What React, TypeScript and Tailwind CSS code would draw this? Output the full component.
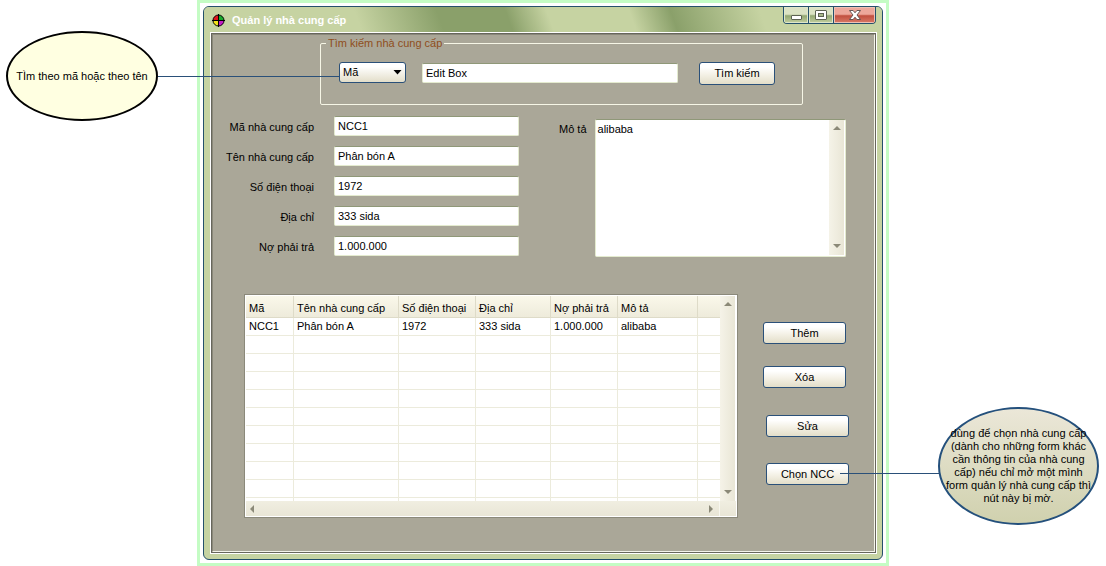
import React, { useState } from "react";

type Supplier = {
  code: string;
  name: string;
  phone: string;
  address: string;
  debt: string;
  note: string;
};

const suppliers: Supplier[] = [
  { code: "NCC1", name: "Phân bón A", phone: "1972", address: "333 sida", debt: "1.000.000", note: "alibaba" },
];

const columns = [
  { title: "Mã", width: "w-[48px]" },
  { title: "Tên nhà cung cấp", width: "w-[105px]" },
  { title: "Số điện thoại", width: "w-[77px]" },
  { title: "Địa chỉ", width: "w-[75px]" },
  { title: "Nợ phải trả", width: "w-[67px]" },
  { title: "Mô tả", width: "w-[80px]" },
  { title: "", width: "" },
];

const fields = [
  { id: "code", label: "Mã nhà cung cấp", value: "NCC1" },
  { id: "name", label: "Tên nhà cung cấp", value: "Phân bón A" },
  { id: "phone", label: "Số điện thoại", value: "1972" },
  { id: "address", label: "Địa chỉ", value: "333 sida" },
  { id: "debt", label: "Nợ phải trả", value: "1.000.000" },
];

const inputClass =
  "h-5 min-w-0 rounded-xs border border-[#e4ebcf] border-t-[#8f9878] bg-white px-[3px] text-[11px] text-black outline-none";

function PushButton({ className, children }: { className: string; children: React.ReactNode }) {
  return (
    <button
      type="button"
      className={`rounded-[3px] border border-[#2a5079] bg-linear-to-b from-white from-20% via-[#f4f1e6] via-55% to-[#e3dec9] text-center whitespace-nowrap ${className}`}
    >
      {children}
    </button>
  );
}

function Arrow({ direction }: { direction: "up" | "down" | "left" | "right" }) {
  const points = {
    up: "0,6 4,2 8,6",
    down: "0,2 8,2 4,6",
    left: "6,0 6,8 2,4",
    right: "2,0 6,4 2,8",
  }[direction];
  return (
    <svg width="8" height="8" viewBox="0 0 8 8" aria-hidden="true">
      <polygon points={points} fill="#8b8978" />
    </svg>
  );
}

function VerticalScroll() {
  return (
    <div className="flex w-[15px] shrink-0 flex-col justify-between bg-linear-to-r from-[#f5f3e8] to-[#e9e6d6]">
      <button type="button" aria-label="Cuộn lên" className="flex h-[15px] items-center justify-center">
        <Arrow direction="up" />
      </button>
      <button type="button" aria-label="Cuộn xuống" className="flex h-[18px] items-center justify-center">
        <Arrow direction="down" />
      </button>
    </div>
  );
}

function AppIcon() {
  return (
    <svg width="13" height="13" viewBox="0 0 13 13" aria-hidden="true">
      <path d="M6.5 6.5V1A5.5 5.5 0 0 0 1 6.5z" fill="#e0141c" />
      <path d="M6.5 6.5V1A5.5 5.5 0 0 1 12 6.5z" fill="#18a82c" />
      <path d="M6.5 6.5H1A5.5 5.5 0 0 0 6.5 12z" fill="#f2e21c" />
      <path d="M6.5 6.5H12A5.5 5.5 0 0 1 6.5 12z" fill="#c41cc4" />
      <circle cx="6.5" cy="6.5" r="5.5" fill="none" stroke="#000" />
      <path d="M6.5 0v13M0 6.5h13" stroke="#000" />
    </svg>
  );
}

function TitleBar() {
  const plain =
    "flex w-[25px] items-center justify-center border-r border-[#24506b] bg-linear-to-b from-[#dbe3c4] from-45% via-[#93a873] via-55% to-[#c3d09f] shadow-[inset_0_0_0_1px_#dfe7ca]";
  return (
    <header className="flex h-[25px] items-start rounded-t-[5px] bg-[linear-gradient(70deg,#c6d3a2_23%,#8aa06a_35%,#8aa06a_45%,#c6d3a2_51%,#c6d3a2_63%,#8aa06a_69%,#c6d3a2_82%)]">
      <div className="flex flex-1 items-center gap-[7px] pt-[6px] pl-2">
        <AppIcon />
        <h1 className="text-[11px] leading-[15px] font-bold text-white">Quản lý nhà cung cấp</h1>
      </div>
      <div className="mr-[6px] flex h-[17px] overflow-hidden rounded-b-[4px] border border-t-0 border-[#24506b]">
        <button type="button" aria-label="Thu nhỏ" className={plain}>
          <svg width="13" height="11" viewBox="0 0 13 11">
            <rect x="1.5" y="5.5" width="10" height="4" rx="0.5" fill="#fff" stroke="#5d6353" />
          </svg>
        </button>
        <button type="button" aria-label="Phóng to" className={plain}>
          <svg width="12" height="11" viewBox="0 0 12 11">
            <rect x="0.5" y="0.5" width="11" height="9" rx="0.5" fill="#fff" stroke="#5d6353" />
            <rect x="3.5" y="3.5" width="5" height="3" fill="#a9b98a" stroke="#5d6353" />
          </svg>
        </button>
        <button
          type="button"
          aria-label="Đóng"
          className="flex w-[41px] items-center justify-center bg-linear-to-b from-[#eda79b] from-45% via-[#c14f3f] via-55% to-[#d97a68] shadow-[inset_0_0_0_1px_#efc1b5]"
        >
          <svg width="12" height="10" viewBox="0 0 12 10">
            <path
              d="M0.5 0.5h3.6L6 2.8 7.9 0.5h3.6L8 5l3.5 4.5H7.9L6 7.2 4.1 9.5H0.5L4 5z"
              fill="#fff"
              stroke="#5a4a4a"
              strokeWidth="0.9"
            />
          </svg>
        </button>
      </div>
    </header>
  );
}

function SearchBox() {
  const [query, setQuery] = useState("Edit Box");
  return (
    <fieldset className="mr-[71px] ml-[107px] rounded-xs border border-[#f6f6e6] pr-[27px] pb-[19px] pl-[18px]">
      <legend className="-ml-[13px] px-[2px] leading-4 text-[#8f4e1c]">Tìm kiếm nhà cung cấp</legend>
      <div className="flex items-start pt-[11px]">
        <div className="relative mr-4 w-[67px] shrink-0">
          <select
            aria-label="Tìm theo"
            className="h-[21px] w-full appearance-none rounded-[3px] border border-[#2a5079] bg-linear-to-b from-white from-20% to-[#e3dec9] pl-[3px] text-[11px] text-black"
          >
            <option>Mã</option>
            <option>Tên</option>
          </select>
          <svg
            className="pointer-events-none absolute top-2 right-1"
            width="9"
            height="5"
            viewBox="0 0 9 5"
            aria-hidden="true"
          >
            <polygon points="0.5,0 8.5,0 4.5,4.5" fill="#000" />
          </svg>
          <span className="absolute top-[14px] right-full h-px w-[181px] bg-[#2a5079]" />
        </div>
        <input
          aria-label="Từ khóa"
          value={query}
          onChange={(e) => setQuery(e.target.value)}
          className={`mt-px mr-[21px] flex-1 ${inputClass}`}
        />
        <PushButton className="h-[23px] w-[76px]">Tìm kiếm</PushButton>
      </div>
    </fieldset>
  );
}

function DetailForm() {
  return (
    <div className="mt-[11px] flex items-start pr-7">
      <div className="grid grid-cols-[101px_185px] gap-x-5 gap-y-[10px]">
        {fields.map((field) => (
          <React.Fragment key={field.id}>
            <label htmlFor={field.id} className="h-5 text-right leading-[22px] whitespace-nowrap">
              {field.label}
            </label>
            <input id={field.id} defaultValue={field.value} className={inputClass} />
          </React.Fragment>
        ))}
      </div>
      <div className="mt-[3px] ml-10 flex flex-1 items-start gap-2">
        <label htmlFor="note" className="leading-5 whitespace-nowrap">
          Mô tả
        </label>
        <div className="flex h-[138px] min-w-0 flex-1 rounded-xs border border-[#e4ebcf] border-t-[#8f9878] bg-white pr-px pb-px">
          <textarea
            id="note"
            defaultValue="alibaba"
            className="min-w-0 flex-1 resize-none overflow-hidden px-[2px] py-[2px] text-[11px] leading-[14px] outline-none"
          />
          <VerticalScroll />
        </div>
      </div>
    </div>
  );
}

function SupplierTable() {
  const emptyRows = Array.from({ length: 11 - suppliers.length });
  const cell = "border-r border-b border-[#ecebdc] px-[3px] last:border-r-0";
  return (
    <div className="h-[224px] min-w-0 flex-1 border border-[#8b897a] bg-white p-px">
      <div className="flex h-[205px] pr-px">
        <div className="min-w-0 flex-1 overflow-hidden">
          <table className="w-full table-fixed border-separate border-spacing-0 text-left whitespace-nowrap">
            <thead>
              <tr className="h-[22px]">
                {columns.map((column, i) => (
                  <th
                    key={i}
                    className={`border-r border-b border-[#dedbc8] bg-linear-to-b from-[#faf8ea] to-[#eeebdb] px-[3px] pt-[3px] font-normal last:border-r-0 ${column.width}`}
                  >
                    {column.title}
                  </th>
                ))}
              </tr>
            </thead>
            <tbody>
              {suppliers.map((s) => (
                <tr key={s.code} className="h-[18px]">
                  {[s.code, s.name, s.phone, s.address, s.debt, s.note, ""].map((text, i) => (
                    <td key={i} className={cell}>
                      {text}
                    </td>
                  ))}
                </tr>
              ))}
              {emptyRows.map((_, r) => (
                <tr key={r} className="h-[18px]">
                  {columns.map((_, i) => (
                    <td key={i} className={cell} />
                  ))}
                </tr>
              ))}
            </tbody>
          </table>
        </div>
        <VerticalScroll />
      </div>
      <div className="flex h-[15px] items-center bg-linear-to-b from-[#f0eee1] to-[#e9e6d6]">
        <button type="button" aria-label="Cuộn trái" className="flex h-full w-3 items-center justify-center">
          <Arrow direction="left" />
        </button>
        <span className="flex-1" />
        <button type="button" aria-label="Cuộn phải" className="flex h-full w-[17px] items-center justify-center">
          <Arrow direction="right" />
        </button>
        <span className="h-full w-[17px] border-l border-[#f8f7ef]" />
      </div>
    </div>
  );
}

function Actions() {
  return (
    <div className="mt-7 mr-[25px] ml-[25px] flex w-[86px] flex-col gap-[27px]">
      <div className="flex flex-col items-start gap-[22px]">
        <PushButton className="h-[22px] w-[83px]">Thêm</PushButton>
        <PushButton className="h-[22px] w-[83px]">Xóa</PushButton>
      </div>
      <div className="flex flex-col items-end gap-[26px]">
        <PushButton className="h-[22px] w-[83px]">Sửa</PushButton>
        <div className="relative">
          <PushButton className="block h-[22px] w-[83px]">Chọn NCC</PushButton>
          <span className="absolute top-[10px] left-[74px] h-px w-[99px] bg-[#2a5079]" />
        </div>
      </div>
    </div>
  );
}

export default function App() {
  return (
    <div className="flex items-start bg-white font-['Liberation_Sans',Arial,sans-serif] text-[11px] leading-[13px] text-black">
      <aside className="w-[197px] shrink-0 pt-[31px] pl-[6px]">
        <div className="flex h-[90px] w-[152px] items-center justify-center rounded-[50%] border-2 border-black bg-[#ffffe1] text-center whitespace-nowrap">
          TÌm theo mã hoặc theo tên
        </div>
      </aside>

      <main className="min-w-0 flex-1 border-3 border-[#c4fcc4] p-[3px]">
        <div className="rounded-[6px] border border-[#24506b] bg-[#c6d3a2]">
          <TitleBar />
          <div className="pr-[5px] pb-[5px] pl-[6px]">
            <div className="border border-white">
              <div className="border border-[#67665c]">
                <div className="border border-t-[#8a887a] border-r-[#f4f4ea] border-b-[#f4f4ea] border-l-[#8a887a] bg-[#aaa798] pb-[33px]">
                  <SearchBox />
                  <DetailForm />
                  <div className="mt-[37px] flex items-start pl-[31px]">
                    <SupplierTable />
                    <Actions />
                  </div>
                </div>
              </div>
            </div>
          </div>
        </div>
      </main>

      <aside className="w-[217px] shrink-0 pt-[407px] pl-[49px]">
        <div className="flex h-[118px] w-[161px] items-center justify-center rounded-[50%] border-2 border-[#24507c] bg-linear-to-b from-[#ebe7d8] to-[#d0d1ae] text-center">
          <p className="w-[148px] shrink-0">
            dùng để chọn nhà cung cấp (dành cho những form khác cần thông tin của nhà cung cấp) nếu chỉ mở một mình
            form quản lý nhà cung cấp thì nút này bị mờ.
          </p>
        </div>
      </aside>
    </div>
  );
}
